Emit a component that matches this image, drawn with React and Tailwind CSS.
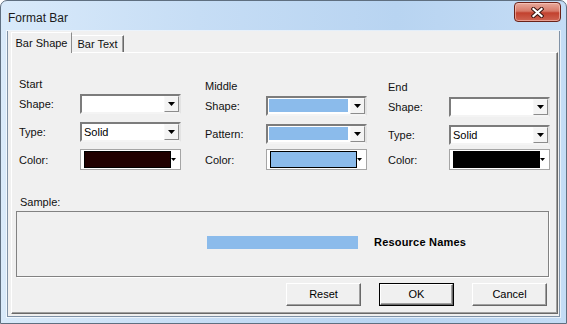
import React from 'react';

// Win7 "Format Bar" dialog

const Arrow = () => (
  <svg width="7" height="4" viewBox="0 0 7 4">
    <path d="M0 0h7L3.5 4z" fill="#000" />
  </svg>
);

const SmallArrow = () => (
  <svg width="5" height="3" viewBox="0 0 5 3">
    <path d="M0 0h5L2.5 3z" fill="#000" />
  </svg>
);

const Combo = ({ value, fill }) => (
  <div className="flex h-[20px] w-[101px] border-2 border-t-[#7c7c7c] border-l-[#7c7c7c] border-r-[#e3e3e3] border-b-[#f4f4f4] bg-white">
    <div className="flex min-w-0 flex-1 items-center">
      {fill ? (
        <div className="mt-[1px] ml-[1px] mb-[2px] mr-[2px] h-[13px] flex-1 self-start bg-[#8bbbeb]" />
      ) : (
        <span className="pl-[2px] text-[11px] leading-[14px] text-black">{value}</span>
      )}
    </div>
    <div className="flex h-[16px] w-[15px] items-center justify-center border border-t-[#f8f8f8] border-l-[#f8f8f8] border-r-[#8c8c8c] border-b-[#8c8c8c] bg-[#f4f4f4]">
      <Arrow />
    </div>
  </div>
);

const ColorCombo = ({ swatch }) => (
  <div className="flex h-[21px] w-[101px] items-center border border-[#a5a5a5] bg-white pl-[3px] pr-[4px]">
    <div className={`h-[17px] w-[87px] border border-black ${swatch}`} />
    <div className="flex flex-1 justify-end">
      <SmallArrow />
    </div>
  </div>
);

const Column = ({ title, rows, className, gaps }) => (
  <div className={`flex w-[162px] flex-col ${className || ''}`}>
    <div className="h-[14px] text-[11px] leading-[14px]">{title}</div>
    {rows.map((r, i) => (
      <div key={r.label} className={`flex items-center ${gaps[i]}`}>
        <span className="w-[61px] text-[11px] leading-[14px]">{r.label}</span>
        {r.control}
      </div>
    ))}
  </div>
);

const Button = ({ children, isDefault }) => (
  <button
    className={`flex h-[23px] w-[75px] items-center justify-center bg-[#f0f0f0] text-[11px] text-black ${
      isDefault ? 'border border-black' : ''
    }`}
  >
    <span className="flex h-full w-full items-center justify-center border border-t-white border-l-white border-r-[#696969] border-b-[#696969] shadow-[inset_-1px_-1px_0_#a0a0a0]">
      {children}
    </span>
  </button>
);

export default function App() {
  return (
    <div className="relative h-[324px] w-[567px] overflow-hidden rounded-t-[7px] border border-[#5f6f80] bg-[linear-gradient(to_right,#d9eafa,#c6ddf5_35%,#b8d4f1_70%,#c4dcf5)] font-['Liberation_Sans',Arial,sans-serif] text-[#111]">
      {/* title bar */}
      <div className="flex h-[30px] items-center pl-[7px] pt-[3px] text-[12px] text-[#1a1a1a]">Format Bar</div>

      <div className="absolute right-[5px] top-[1px] flex h-[20px] w-[47px] items-center justify-center rounded-[4px] border border-[#6a2219] bg-[linear-gradient(to_bottom,#e8aa9c,#d77a69_45%,#c2412e_55%,#cf6553)] shadow-[inset_0_0_0_1px_rgba(255,210,200,0.55)]">
        <svg width="13" height="11" viewBox="0 0 13 11">
          <path d="M2.5 2L10.5 9M10.5 2L2.5 9" stroke="#3b1510" strokeWidth="4.2" strokeLinecap="square" />
          <path d="M2.5 2L10.5 9M10.5 2L2.5 9" stroke="#fff" strokeWidth="2.2" strokeLinecap="square" />
        </svg>
      </div>

      {/* client area */}
      <div className="mx-[6px] flex h-[286px] flex-col border border-t-0 border-[#8092a6] bg-[#f0f0f0] shadow-[0_0_0_1px_rgba(255,255,255,0.6)]">
        {/* tabs */}
        <div className="ml-[3px] mt-[1px] flex h-[20px] items-end">
          <div className="relative z-10 -mb-px flex h-[21px] w-[61px] items-center justify-center border border-b-0 border-t-white border-l-white border-r-[#8c8c8c] bg-[#f0f0f0] text-[11px]">
            Bar Shape
          </div>
          <div className="flex h-[17px] w-[52px] items-center justify-center border border-b-0 border-l-0 border-t-white border-r-[#696969] text-[11px] shadow-[inset_-1px_0_0_#a0a0a0]">
            Bar Text
          </div>
        </div>

        {/* tab panel */}
        <div className="ml-[3px] mr-[1px] flex h-[262px] flex-col border border-t-white border-l-white border-r-[#696969] border-b-[#696969] shadow-[inset_-1px_-1px_0_#a0a0a0]">
          <div className="ml-[7px] mt-[24px] flex">
            <Column
              title="Start"
              gaps={['mt-[3px]', 'mt-[8px]', 'mt-[7px]']}
              rows={[
                { label: 'Shape:', control: <Combo value="" /> },
                { label: 'Type:', control: <Combo value="Solid" /> },
                { label: 'Color:', control: <ColorCombo swatch="bg-[#200000]" /> },
              ]}
            />
            <Column
              title="Middle"
              className="ml-[24px] pt-[2px]"
              gaps={['mt-[3px]', 'mt-[8px]', 'mt-[5px]']}
              rows={[
                { label: 'Shape:', control: <Combo fill /> },
                { label: 'Pattern:', control: <Combo fill /> },
                { label: 'Color:', control: <ColorCombo swatch="bg-[#8bbbeb]" /> },
              ]}
            />
            <Column
              title="End"
              className="ml-[21px] pt-[3px]"
              gaps={['mt-[3px]', 'mt-[8px]', 'mt-[4px]']}
              rows={[
                { label: 'Shape:', control: <Combo value="" /> },
                { label: 'Type:', control: <Combo value="Solid" /> },
                { label: 'Color:', control: <ColorCombo swatch="bg-black" /> },
              ]}
            />
          </div>

          <div className="ml-[8px] mt-[25px] h-[14px] text-[11px] leading-[14px]">Sample:</div>
          <div className="ml-[4px] mt-[2px] h-[66px] w-[533px] border border-[#828282] shadow-[1px_1px_0_#fff]">
            <div className="mt-[23px] flex h-[14px] items-center pl-[190px]">
              <div className="h-[13px] w-[151px] bg-[#8bbbeb]" />
              <span className="ml-[16px] text-[11px] font-bold tracking-[0.2px] text-black">Resource Names</span>
            </div>
          </div>

          <div className="mr-[10px] mt-[6px] flex justify-end gap-[18px]">
            <Button>Reset</Button>
            <Button isDefault>OK</Button>
            <Button>Cancel</Button>
          </div>
        </div>
      </div>
    </div>
  );
}
